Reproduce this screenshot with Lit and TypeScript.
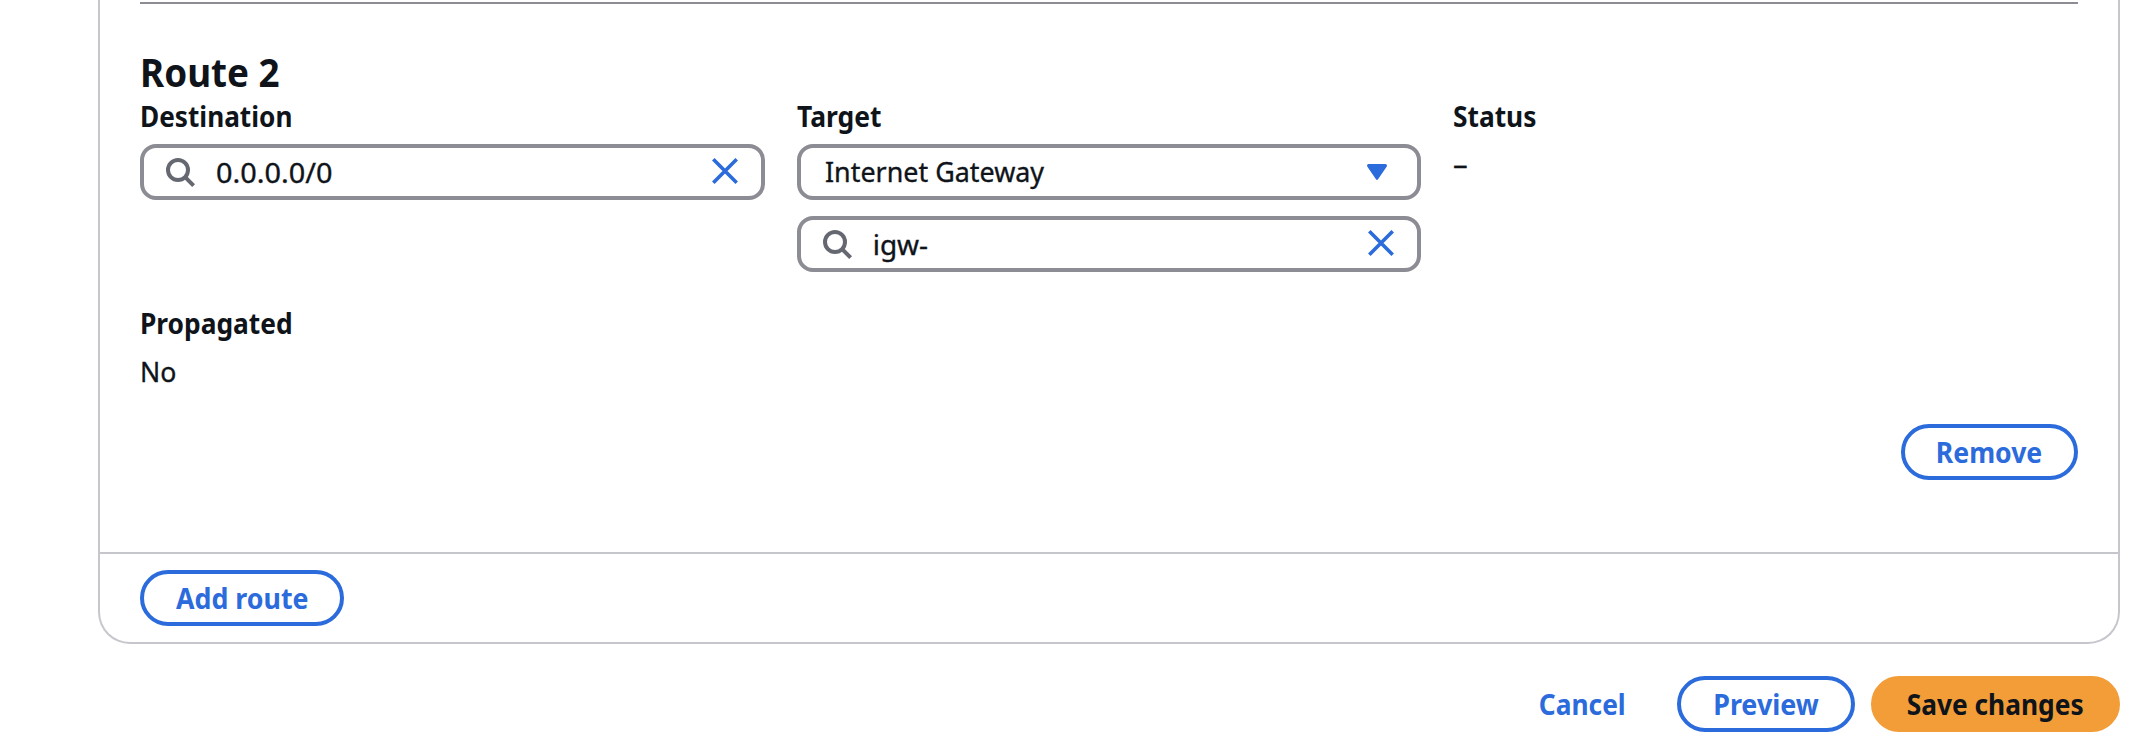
import { LitElement, html, css, svg } from "lit";
import { customElement, property } from "lit/decorators.js";

/* Text drawn with a small horizontal stretch. */
const label = (text: string, stretch: number) =>
  html`<span class="fit" style="transform:scaleX(${stretch})">${text}</span>`;

const fit = css`
  .fit { display: inline-block; transform-origin: var(--fit-origin, 0 50%); white-space: nowrap; }
  .value, .status, .no { -webkit-text-stroke: .35px #0f141a; }
`;

const magnifier = svg`<circle cx="12" cy="12" r="10" /><path d="M18.9 18.9 27.6 27.6" />`;

@customElement("route-field")
export class RouteField extends LitElement {
  @property() kind: "search" | "select" = "search";
  @property() value = "";
  @property({ type: Number }) stretch = 1;

  static styles = [fit, css`
    :host { display: block; }
    .box {
      display: flex; align-items: center; box-sizing: border-box; height: 56px;
      border: 4px solid #8c8c94; border-radius: 16px; padding: 0 23px 0 22px;
      line-height: 38px;
    }
    .select { padding: 0 30px 0 24px; }
    .value { flex: 1; }
    .select .value { padding-bottom: 2px; }
    svg { display: block; fill: none; flex: none; }
    .magnifier { width: 30px; height: 30px; margin: 2px 20px 0 0; stroke: #656871; stroke-width: 4; }
    .clear { width: 26px; height: 26px; margin-top: -2px; stroke: #2b6bdb; stroke-width: 3.6; }
    .caret { width: 20px; height: 16px; fill: #2b6bdb; }
  `];

  render() {
    return this.kind === "select"
      ? html`<div class="box select">
          <div class="value">${label(this.value, this.stretch)}</div>
          <svg class="caret" viewBox="0 0 20 16"><path d="M1.6 0H18.4Q20.8 .6 19.6 2.8L11.2 15Q10 16.8 8.8 15L.4 2.8Q-.8 .6 1.6 0Z" /></svg>
        </div>`
      : html`<div class="box">
          <svg class="magnifier" viewBox="0 0 30 30">${magnifier}</svg>
          <div class="value">${label(this.value, this.stretch)}</div>
          <svg class="clear" viewBox="0 0 26 26"><path d="M1.3 1.3 24.7 24.7M24.7 1.3 1.3 24.7" /></svg>
        </div>`;
  }
}

@customElement("app-root")
export class AppRoot extends LitElement {
  static styles = [fit, css`
    :host {
      display: block; box-sizing: border-box; height: 752px; overflow: hidden;
      padding: 0 32px 0 98px; background: #fff; color: #0f141a;
      font: 400 28px/38px "Noto Sans", "Open Sans", sans-serif;
    }
    .card {
      box-sizing: border-box; height: 644px; display: flex; flex-direction: column;
      border: 2px solid #c6c6cd; border-top: 0; border-radius: 0 0 32px 32px; background: #fff;
    }
    .body { flex: 1; padding: 2px 40px 0; }
    .rule { height: 2px; background: #8c8c94; }
    h3 { margin: 43px 0 0; font-size: 40px; line-height: 50px; font-weight: 700; }
    .grid { display: grid; grid-template-columns: repeat(3, 1fr); gap: 32px; }
    .name { font-weight: 700; height: 38px; line-height: 38px; }
    .col { display: flex; flex-direction: column; }
    .fields { display: flex; flex-direction: column; gap: 16px; margin-top: 9px; }
    .status { margin-top: 9px; }
    .no { margin-top: 10px; }
    .second { margin-top: 32px; }
    .right { display: flex; justify-content: flex-end; margin-top: 34px; }
    .foot { border-top: 2px solid #c6c6cd; padding: 16px 40px; }
    button {
      --fit-origin: 50% 50%;
      display: flex; align-items: center; justify-content: center; box-sizing: border-box;
      height: 56px; padding: 0; border: 4px solid #2b6bdb; border-radius: 28px; background: none;
      color: #2b6bdb; font: 700 28px/38px "Noto Sans", "Open Sans", sans-serif;
    }
    .remove { width: 177px; }
    .add { width: 204px; }
    .actions { display: flex; justify-content: flex-end; gap: 16px; margin-top: 32px; }
    .cancel { width: 158px; border-color: transparent; }
    .preview { width: 178px; }
    .save { width: 249px; background: #f29d38; border-color: #f29d38; color: #0f141a; }
  `];

  render() {
    return html`
      <section class="card">
        <div class="body">
          <div class="rule"></div>
          <h3>${label("Route 2", 0.92)}</h3>
          <div class="grid">
            <div class="col">
              <div class="name">${label("Destination", 0.935)}</div>
              <div class="fields"><route-field value="0.0.0.0/0" stretch="1.03"></route-field></div>
            </div>
            <div class="col">
              <div class="name">${label("Target", 0.945)}</div>
              <div class="fields">
                <route-field kind="select" value="Internet Gateway" stretch="0.96"></route-field>
                <route-field value="igw-" stretch="1"></route-field>
              </div>
            </div>
            <div class="col">
              <div class="name">${label("Status", 0.94)}</div>
              <div class="status">${label("–", 1.05)}</div>
            </div>
          </div>
          <div class="col second">
            <div class="name">${label("Propagated", 0.94)}</div>
            <div class="no">${label("No", 0.95)}</div>
          </div>
          <div class="right"><button class="remove">${label("Remove", 0.95)}</button></div>
        </div>
        <div class="foot"><button class="add">${label("Add route", 0.955)}</button></div>
      </section>
      <div class="actions">
        <button class="cancel">${label("Cancel", 0.94)}</button>
        <button class="preview">${label("Preview", 0.96)}</button>
        <button class="save">${label("Save changes", 0.94)}</button>
      </div>`;
  }
}
